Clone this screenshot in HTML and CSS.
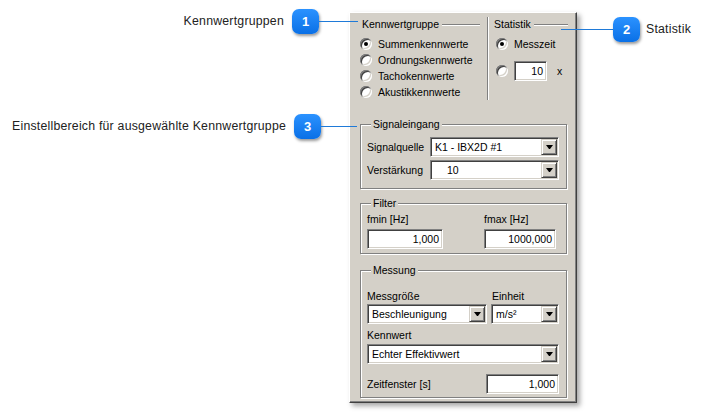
FILE: index.html
```html
<!DOCTYPE html>
<html lang="de">
<head>
    <meta charset="UTF-8" />
    <title>Kennwerte</title>
    <link rel="stylesheet" href="styles.css">
</head>
<body>
<div class="stage">
    <div class="panel">
        <div class="top">
            <div class="col col-groups">
                <div class="heading"><span>Kennwertgruppe</span><i class="rule"></i></div>
                <ul class="radios">
                    <li><span class="radio checked"></span>Summenkennwerte</li>
                    <li><span class="radio"></span>Ordnungskennwerte</li>
                    <li><span class="radio"></span>Tachokennwerte</li>
                    <li><span class="radio"></span>Akustikkennwerte</li>
                </ul>
            </div>
            <div class="vsep"></div>
            <div class="col col-stats">
                <div class="heading"><span>Statistik</span><i class="rule"></i></div>
                <ul class="radios">
                    <li><span class="radio checked"></span>Messzeit</li>
                    <li class="count-row">
                        <span class="radio"></span>
                        <span class="field count">10</span>
                        <span class="unit">x</span>
                    </li>
                </ul>
            </div>
        </div>

        <fieldset class="group signal">
            <legend>Signaleingang</legend>
            <div class="row">
                <label>Signalquelle</label>
                <div class="combo"><span class="value">K1 - IBX2D #1</span><span class="combo-btn"></span></div>
            </div>
            <div class="row">
                <label>Verstärkung</label>
                <div class="combo"><span class="value indent">10</span><span class="combo-btn"></span></div>
            </div>
        </fieldset>

        <fieldset class="group filter">
            <legend>Filter</legend>
            <div class="filter-grid">
                <label>fmin [Hz]</label>
                <label>fmax [Hz]</label>
                <span class="field fmin">1,000</span>
                <span class="field fmax">1000,000</span>
            </div>
        </fieldset>

        <fieldset class="group measure">
            <legend>Messung</legend>
            <div class="measure-grid">
                <label>Messgröße</label>
                <label class="unit-label">Einheit</label>
                <div class="combo"><span class="value">Beschleunigung</span><span class="combo-btn"></span></div>
                <div class="combo"><span class="value">m/s²</span><span class="combo-btn"></span></div>
            </div>
            <label class="block-label">Kennwert</label>
            <div class="combo"><span class="value">Echter Effektivwert</span><span class="combo-btn"></span></div>
            <div class="window-row">
                <label>Zeitfenster [s]</label>
                <span class="field window">1,000</span>
            </div>
        </fieldset>
    </div>

    <div class="callout callout-1">
        <span class="callout-text">Kennwertgruppen</span>
        <span class="badge">1</span>
        <span class="leader"></span>
    </div>
    <div class="callout callout-2">
        <span class="leader"></span>
        <span class="badge">2</span>
        <span class="callout-text">Statistik</span>
    </div>
    <div class="callout callout-3">
        <span class="callout-text">Einstellbereich für ausgewählte Kennwertgruppe</span>
        <span class="badge">3</span>
        <span class="leader"></span>
    </div>
</div>
</body>
</html>
```

FILE: styles.css
```css
* {
    box-sizing: border-box;
}
body {
    margin: 0;
    background: #fff;
    font-family: "Liberation Sans", Arial, sans-serif;
}
.stage {
    position: relative;
    width: 710px;
    height: 413px;
    padding: 12px 0 0 349px;
}

/* dialog panel */
.panel {
    width: 228px;
    padding-bottom: 4px;
    background: #d4d0c8;
    border: 1px solid;
    border-color: #fff #404040 #404040 #fff;
    box-shadow: inset -1px -1px 0 #808080, 3px 3px 5px rgba(0,0,0,0.35);
    font-size: 10.5px;
    color: #000;
}
label {
    display: block;
    line-height: 13px;
}

.top {
    display: flex;
    padding: 5px 0 9px 10px;
}
.col-groups {
    width: 120px;
}
.col-groups .heading {
    padding-left: 2px;
}
.col-stats {
    width: 74px;
}
.col-stats .radios {
    padding-left: 2px;
}
.heading {
    display: flex;
    align-items: center;
    height: 13px;
    line-height: 13px;
}
.rule {
    flex: 1;
    margin-left: 3px;
    border-top: 1px solid #808080;
    border-bottom: 1px solid #fff;
}
.vsep {
    margin: -1px 5px 0 7px;
    border-left: 1px solid #808080;
    border-right: 1px solid #fff;
}
.radios {
    list-style: none;
    margin: 5px 0 0;
    padding: 0;
}
.radios li {
    display: flex;
    align-items: center;
    gap: 6px;
    height: 16px;
}
.radios li.count-row {
    height: 20px;
    margin-top: 9px;
}
.radio {
    display: flex;
    align-items: center;
    justify-content: center;
    width: 12px;
    height: 12px;
    flex: none;
    border-radius: 50%;
    background: #fff;
    box-shadow: inset 1px 1px 0 #808080, inset -1px -1px 0 #fff,
                inset 2px 2px 0 #404040, inset -2px -2px 0 #d4d0c8;
}
.radio.checked::after {
    content: "";
    width: 4px;
    height: 4px;
    border-radius: 50%;
    background: #000;
}
.unit {
    margin-left: 4px;
}

/* sunken fields */
.field, .combo {
    display: flex;
    align-items: center;
    height: 20px;
    background: #fff;
    border: 1px solid;
    border-color: #808080 #fff #fff #808080;
    box-shadow: inset 1px 1px 0 #404040, inset -1px -1px 0 #d4d0c8;
}
.field {
    justify-content: flex-end;
    padding-right: 3px;
}
.field.count {
    width: 33px;
}
.combo {
    padding: 1px;
}
.combo .value {
    flex: 1;
    padding-left: 3px;
    white-space: nowrap;
}
.combo .value.indent {
    padding-left: 15px;
}
.combo-btn {
    display: flex;
    align-items: center;
    justify-content: center;
    width: 16px;
    height: 16px;
    flex: none;
    background: #d4d0c8;
    border: 1px solid;
    border-color: #d4d0c8 #404040 #404040 #d4d0c8;
    box-shadow: inset 1px 1px 0 #fff, inset -1px -1px 0 #808080;
}
.combo-btn::after {
    content: "";
    width: 1px;
    height: 0;
    border-top: 4px solid #000;
    border-left: 3px solid transparent;
    border-right: 3px solid transparent;
}

/* group boxes */
.group {
    margin: 9px 9px 0 10px;
    padding: 6px 7px 8px 6px;
    border: 1px solid #808080;
    box-shadow: inset 1px 1px 0 #fff, 1px 1px 0 #fff;
}
.group legend {
    margin-left: 4px;
    padding: 0 2px;
    line-height: 13px;
    background: #d4d0c8;
}
.signal .row {
    display: grid;
    grid-template-columns: 63px 1fr;
    align-items: center;
}
.signal .row + .row {
    margin-top: 3px;
}

.group.filter {
    margin-top: 8px;
    padding-top: 3px;
    padding-bottom: 4px;
}
.filter-grid {
    display: grid;
    grid-template-columns: 117px 72px;
    row-gap: 3px;
}
.field.fmin {
    width: 76px;
}

.group.measure {
    margin-top: 10px;
    padding-top: 13px;
    padding-bottom: 3px;
}
.measure-grid {
    display: grid;
    grid-template-columns: 120px 1fr;
    column-gap: 4px;
    row-gap: 1px;
}
.unit-label {
    padding-left: 1px;
}
.block-label {
    margin: 5px 0 2px;
}
.window-row {
    display: flex;
    align-items: center;
    justify-content: space-between;
    margin-top: 10px;
}
.field.window {
    width: 73px;
}

/* callouts over the screenshot */
.callout {
    position: absolute;
    display: flex;
    align-items: center;
    height: 26px;
    font-size: 12.3px;
    letter-spacing: 0.22px;
    color: #222;
}
.callout-1 {
    top: 8px;
    right: 352px;
}
.callout-2 {
    top: 16px;
    left: 561px;
}
.callout-3 {
    top: 113px;
    right: 353px;
}
.callout-text {
    white-space: nowrap;
}
.callout-1 .callout-text,
.callout-3 .callout-text {
    margin-right: 8px;
}
.callout-2 .callout-text {
    margin-left: 6px;
}
.badge {
    display: flex;
    align-items: center;
    justify-content: center;
    width: 27px;
    height: 25px;
    border-radius: 7px;
    background: linear-gradient(#2b92ff, #0a70e6);
    box-shadow: 1px 2px 3px rgba(0,0,0,0.4);
    color: #fff;
    font-weight: bold;
    font-size: 13px;
    letter-spacing: 0;
}
.leader {
    height: 1px;
    background: #1f7ad8;
}
.callout-1 .leader {
    width: 39px;
}
.callout-2 .leader {
    width: 52px;
}
.callout-3 .leader {
    width: 36px;
}
```
